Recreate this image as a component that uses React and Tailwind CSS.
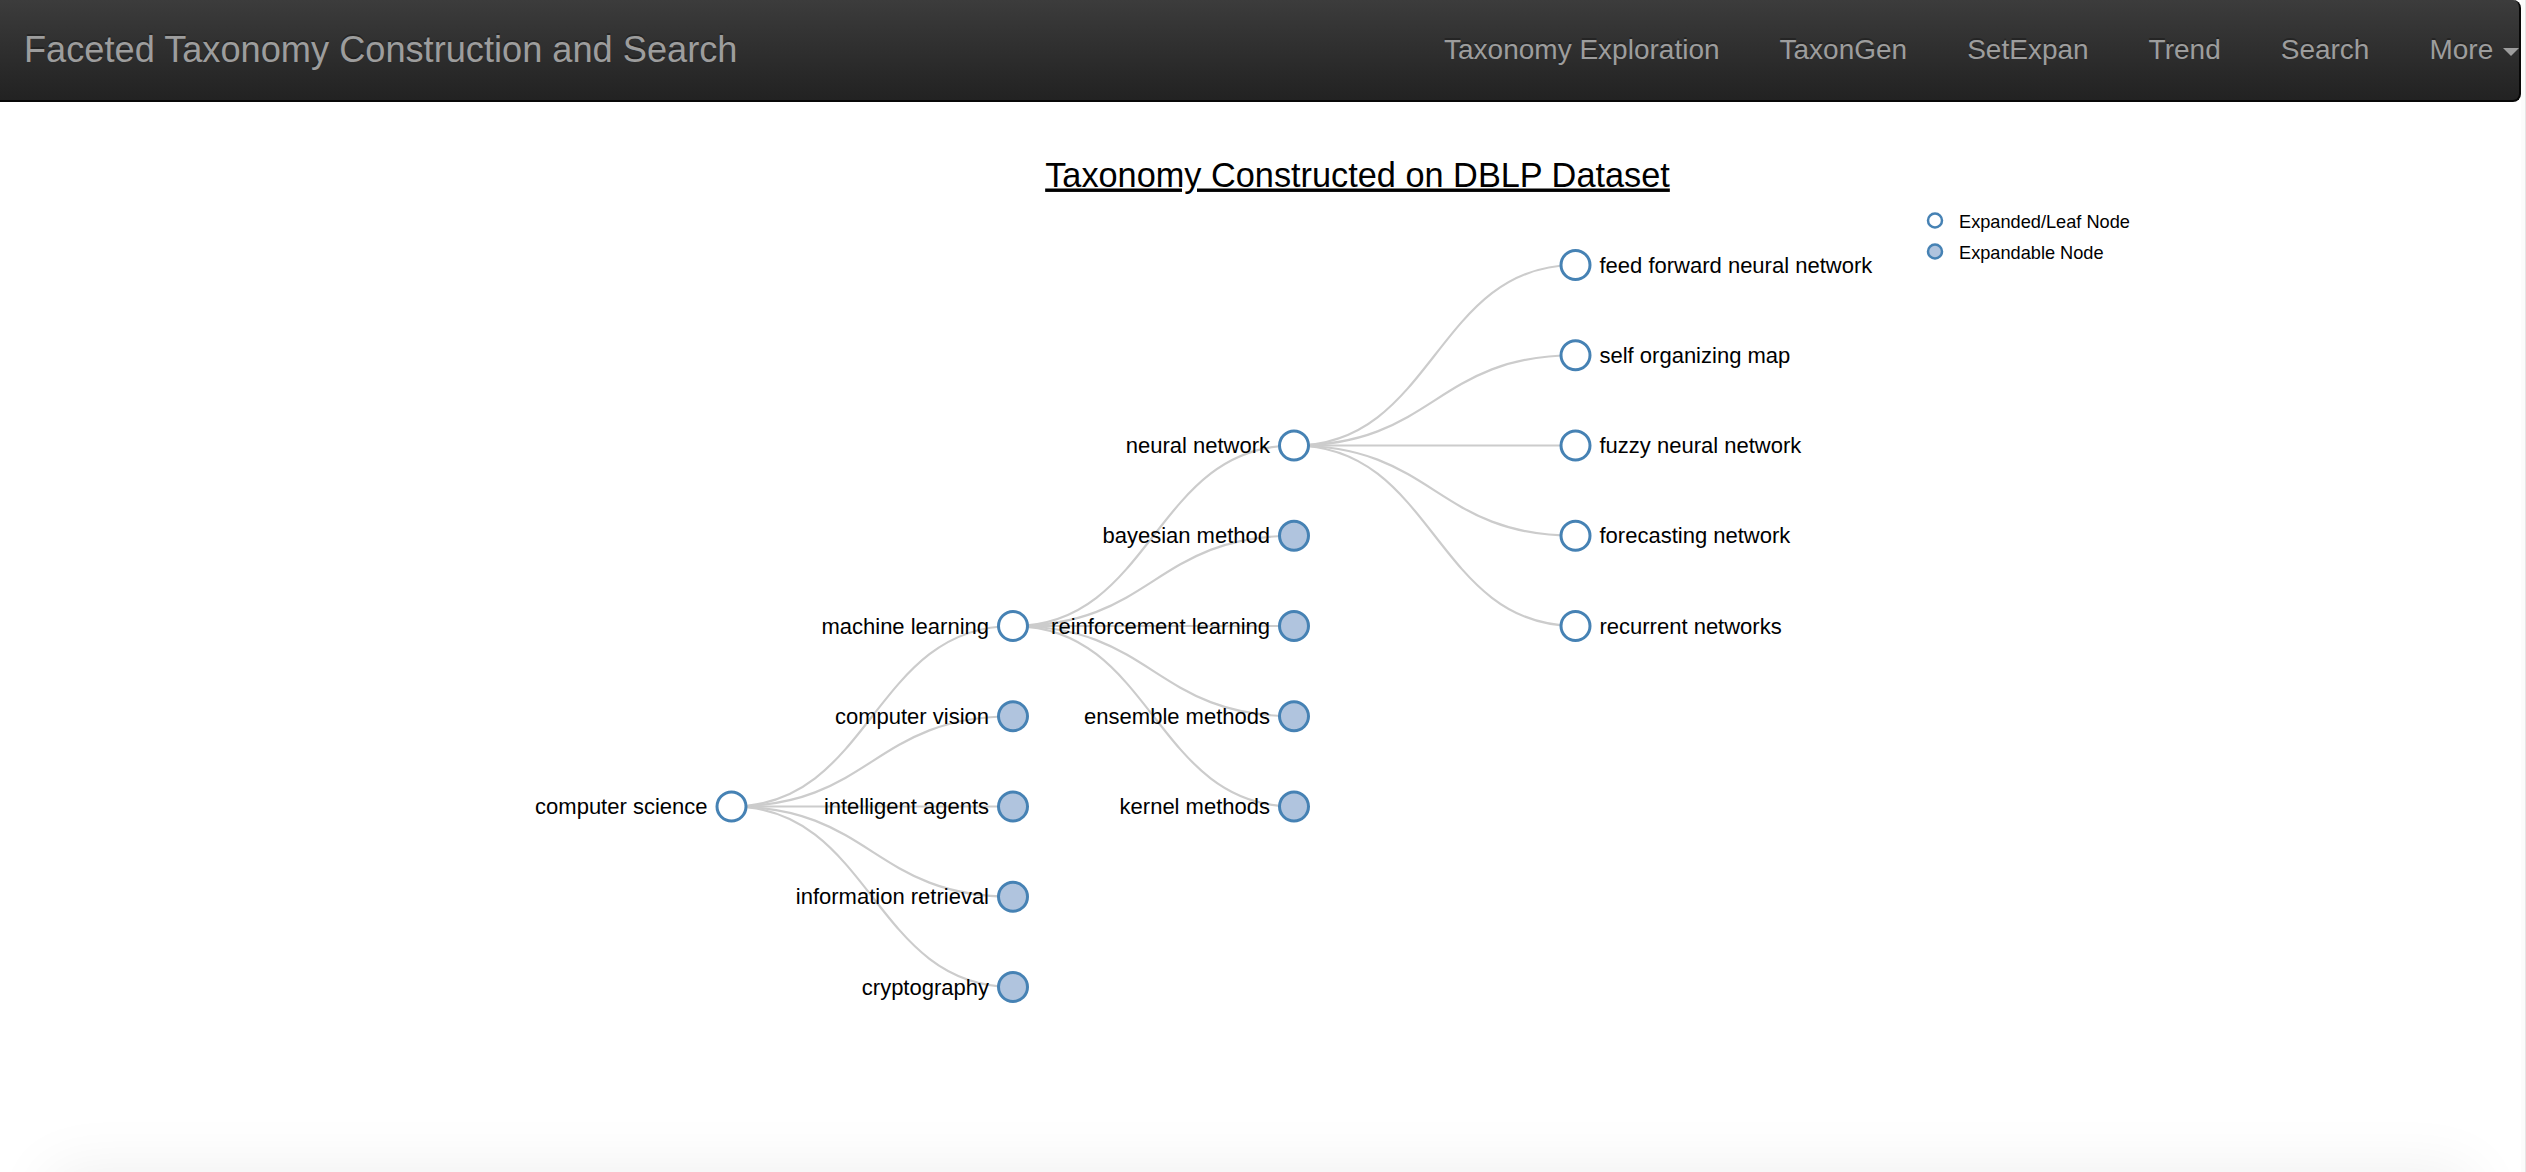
import React from 'react';

const COLS = [731.5, 1013, 1294, 1575.5];
const row = (k) => 444 + k * 90.25;

// open = expanded, closed = has hidden children, leaf = nothing below
const NODES = [
  { id: 'cs', label: 'computer science', col: 0, k: 4, state: 'open' },
  { id: 'ml', label: 'machine learning', col: 1, k: 2, state: 'open', parent: 'cs' },
  { id: 'cv', label: 'computer vision', col: 1, k: 3, state: 'closed', parent: 'cs' },
  { id: 'ia', label: 'intelligent agents', col: 1, k: 4, state: 'closed', parent: 'cs' },
  { id: 'ir', label: 'information retrieval', col: 1, k: 5, state: 'closed', parent: 'cs' },
  { id: 'cr', label: 'cryptography', col: 1, k: 6, state: 'closed', parent: 'cs' },
  { id: 'nn', label: 'neural network', col: 2, k: 0, state: 'open', parent: 'ml' },
  { id: 'bm', label: 'bayesian method', col: 2, k: 1, state: 'closed', parent: 'ml' },
  { id: 'rl', label: 'reinforcement learning', col: 2, k: 2, state: 'closed', parent: 'ml' },
  { id: 'em', label: 'ensemble methods', col: 2, k: 3, state: 'closed', parent: 'ml' },
  { id: 'km', label: 'kernel methods', col: 2, k: 4, state: 'closed', parent: 'ml' },
  { id: 'ff', label: 'feed forward neural network', col: 3, k: -2, state: 'leaf', parent: 'nn' },
  { id: 'so', label: 'self organizing map', col: 3, k: -1, state: 'leaf', parent: 'nn' },
  { id: 'fz', label: 'fuzzy neural network', col: 3, k: 0, state: 'leaf', parent: 'nn' },
  { id: 'fc', label: 'forecasting network', col: 3, k: 1, state: 'leaf', parent: 'nn' },
  { id: 'rn', label: 'recurrent networks', col: 3, k: 2, state: 'leaf', parent: 'nn' },
];

const byId = Object.fromEntries(NODES.map((n) => [n.id, n]));

function diagonal(s, t) {
  const sx = COLS[s.col];
  const sy = row(s.k);
  const tx = COLS[t.col];
  const ty = row(t.k);
  const mx = (sx + tx) / 2;
  return `M${sx},${sy} C${mx},${sy} ${mx},${ty} ${tx},${ty}`;
}

function TreeChart() {
  return (
    <svg width="2521" height="1070" viewBox="0 100.5 2521 1070" className="block">
      <text
        x="1357.5"
        y="185"
        textAnchor="middle"
        fontSize="34.3"
        fill="#000"
        textDecoration="underline"
      >
        Taxonomy Constructed on DBLP Dataset
      </text>

      <g>
        <circle cx="1935" cy="219" r="7" fill="#fff" stroke="#4682b4" strokeWidth="2.5" />
        <text x="1959" y="226" fontSize="18.2" fill="#000">Expanded/Leaf Node</text>
        <circle cx="1935" cy="250" r="7" fill="#b0c4de" stroke="#4682b4" strokeWidth="2.5" />
        <text x="1959" y="257" fontSize="18.2" fill="#000">Expandable Node</text>
      </g>

      <g fill="none" stroke="#ccc" strokeWidth="2.2">
        {NODES.filter((n) => n.parent).map((n) => (
          <path key={n.id} d={diagonal(byId[n.parent], n)} />
        ))}
      </g>

      {NODES.map((n) => {
        const cx = COLS[n.col];
        const cy = row(n.k);
        const right = n.state === 'leaf';
        return (
          <g key={n.id}>
            <circle
              cx={cx}
              cy={cy}
              r="14.5"
              fill={n.state === 'closed' ? '#b0c4de' : '#fff'}
              stroke="#4682b4"
              strokeWidth="3"
            />
            <text
              x={right ? cx + 24 : cx - 24}
              y={cy}
              dy="0.35em"
              textAnchor={right ? 'start' : 'end'}
              fontSize="22"
              fill="#000"
            >
              {n.label}
            </text>
          </g>
        );
      })}
    </svg>
  );
}

const LINKS = ['Taxonomy Exploration', 'TaxonGen', 'SetExpan', 'Trend', 'Search'];

export default function App() {
  return (
    <div className="h-[1172px] overflow-hidden bg-white flex font-['Liberation_Sans',Arial,sans-serif]">
      <div className="flex-1 min-w-0 flex flex-col">
        <nav className="h-[102px] shrink-0 flex items-start bg-gradient-to-b from-[#3c3c3c] to-[#222] border-b-2 border-r-2 border-[#080808] rounded-r-lg overflow-hidden">
          <a className="pl-[24px] pt-[30px] leading-[40px] text-[36.2px] text-[#9d9d9d] [text-shadow:0_-2px_0_rgba(0,0,0,0.25)] whitespace-nowrap">
            Faceted Taxonomy Construction and Search
          </a>
          <ul className="ml-auto flex items-start text-[28px] leading-[40px] text-[#9d9d9d] [text-shadow:0_-2px_0_rgba(0,0,0,0.25)]">
            {LINKS.map((label) => (
              <li key={label} className="px-[30px] pt-[30px] whitespace-nowrap">
                {label}
              </li>
            ))}
            <li className="pl-[30px] pr-0 pt-[30px] whitespace-nowrap">
              More{' '}
              <span className="inline-block w-0 h-0 ml-[2px] align-middle border-t-8 border-x-8 border-x-transparent border-t-[#9d9d9d]" />
            </li>
          </ul>
        </nav>
        <div className="h-[1070px] shrink-0">
          <TreeChart />
        </div>
        <div className="mx-[50px] h-[200px] shrink-0 bg-white shadow-[0_0_60px_rgba(0,0,0,0.07)]" />
      </div>
      <div className="w-[5px] shrink-0 bg-[#fbfbfb] border-r border-[#e6e6e6]" />
    </div>
  );
}
